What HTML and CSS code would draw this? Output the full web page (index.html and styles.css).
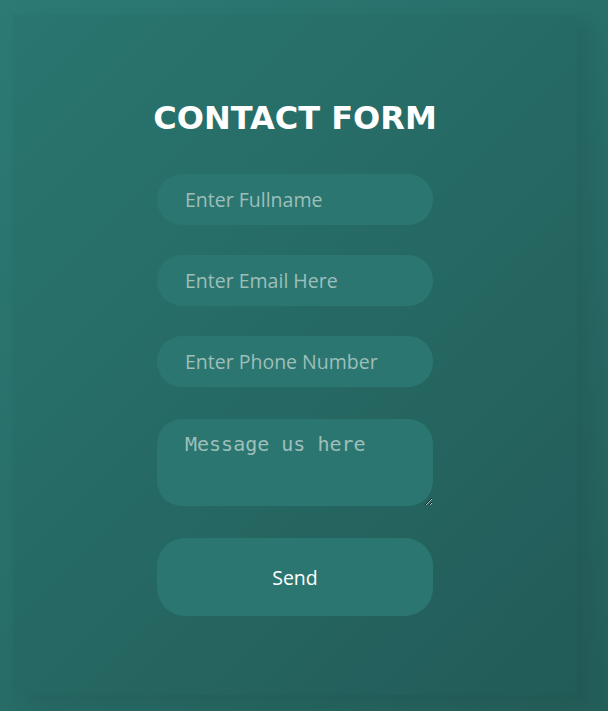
FILE: index.html
```html
<!DOCTYPE html>
<html lang="en">
<head>
<meta charset="utf-8">
<title>Contact Form</title>
<link rel="stylesheet" href="styles.css">
</head>
<body>
<div class="page">
  <div class="card">
    <h1 class="title">CONTACT FORM</h1>
    <form class="form">
      <input class="field" type="text" placeholder="Enter Fullname">
      <input class="field" type="email" placeholder="Enter Email Here">
      <input class="field" type="tel" placeholder="Enter Phone Number">
      <textarea class="message" placeholder="Message us here"></textarea>
      <button class="send" type="button">Send</button>
    </form>
  </div>
</div>
</body>
</html>
```

FILE: styles.css
```css
html, body {
  margin: 0;
  height: 100%;
}
body {
  background: linear-gradient(135deg, #2c7a74 0%, #286d68 50%, #245e5a 100%);
  font-family: "Open Sans", "Noto Sans", sans-serif;
  overflow: hidden;
}
.page {
  box-sizing: border-box;
  height: 711px;
  padding: 14px 31px 16px 13px;
  display: flex;
}
.card {
  flex: 1;
  background: rgba(0, 0, 0, 0.03);
  box-shadow: 12px 10px 18px rgba(0, 0, 0, 0.08);
  padding-top: 86px;
  display: flex;
  flex-direction: column;
  align-items: center;
}
.title {
  margin: 0;
  font-family: "DejaVu Sans", sans-serif;
  font-weight: bold;
  font-size: 32px;
  line-height: 37px;
  color: #ffffff;
}
.form {
  margin-top: 37px;
  width: 276px;
  display: flex;
  flex-direction: column;
  gap: 30px;
}
.field, .message, .send {
  box-sizing: border-box;
  width: 276px;
  border: none;
  outline: none;
  background: #2c7671;
  margin: 0;
}
.field {
  height: 51px;
  border-radius: 25px;
  padding: 0 20px 0 28px;
  font-family: "Open Sans", sans-serif;
  font-size: 19.5px;
  color: #ffffff;
}
.field::placeholder {
  color: #9dbfba;
}
.message {
  margin-top: 2px;
  height: 87px;
  border-radius: 25px;
  padding: 13px 20px 10px 28px;
  font-family: "DejaVu Sans Mono", monospace;
  font-size: 20px;
  line-height: 24px;
  color: #ffffff;
  resize: vertical;
  display: block;
}
.message::placeholder {
  color: #9dbfba;
}
.send {
  margin-top: 2px;
  height: 78px;
  border-radius: 28px;
  font-family: "Open Sans", sans-serif;
  font-size: 19.5px;
  color: #ffffff;
  cursor: pointer;
}
```
